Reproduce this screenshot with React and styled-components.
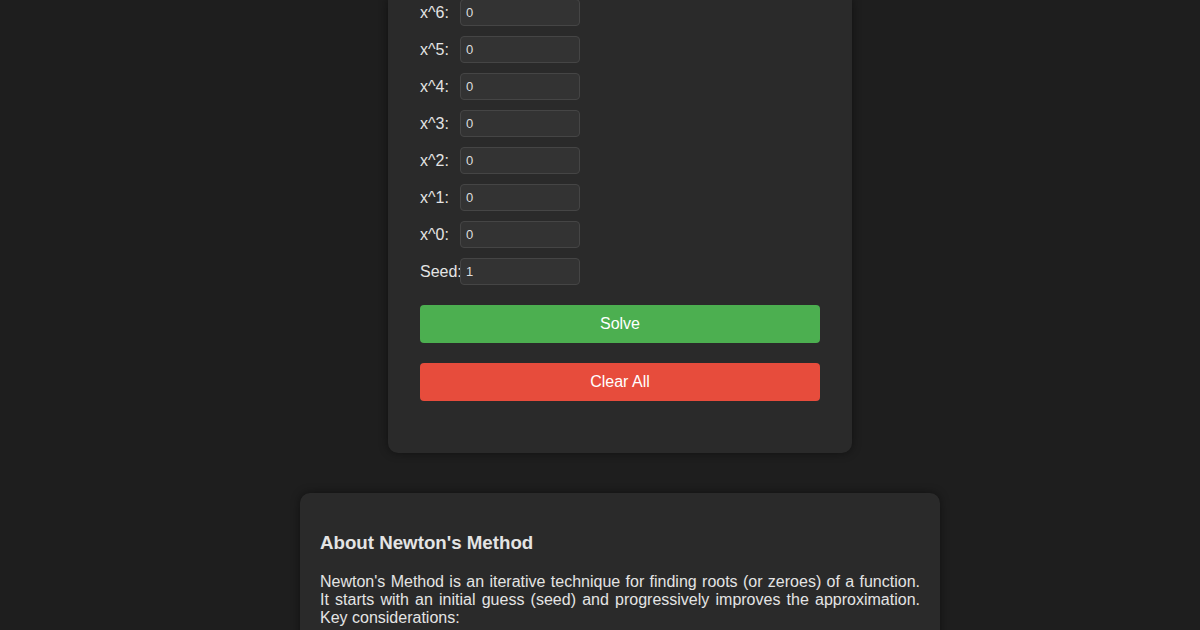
import React, { useState } from "react";
import styled, { createGlobalStyle } from "styled-components";

const GlobalStyle = createGlobalStyle`
  body {
    margin: 0;
    background-color: #1e1e1e;
    color: #e4e4e4;
    font-family: "Liberation Sans", Arial, sans-serif;
  }
`;

const powers = [6, 5, 4, 3, 2, 1, 0];

const App = () => {
  const [coefs, setCoefs] = useState(powers.map(() => "0"));
  const [seed, setSeed] = useState("1");

  const handleCoef = (i, value) => {
    const next = [...coefs];
    next[i] = value;
    setCoefs(next);
  };

  const clearAll = () => {
    setCoefs(powers.map(() => "0"));
    setSeed("1");
  };

  return (
    <>
      <GlobalStyle />
      <Page>
        <SolverCard>
          {powers.map((p, i) => (
            <Row key={p}>
              <Label>x^{p}:</Label>
              <Input
                type="text"
                value={coefs[i]}
                onChange={(e) => handleCoef(i, e.target.value)}
              />
            </Row>
          ))}
          <Row>
            <Label>Seed:</Label>
            <Input
              type="text"
              value={seed}
              onChange={(e) => setSeed(e.target.value)}
            />
          </Row>
          <Actions>
            <Btn color="#4caf50">Solve</Btn>
            <Btn color="#e74c3c" onClick={clearAll}>
              Clear All
            </Btn>
          </Actions>
        </SolverCard>

        <InfoCard>
          <h3>About Newton's Method</h3>
          <p>
            Newton's Method is an iterative technique for finding roots (or
            zeroes) of a function. It starts with an initial guess (seed) and
            progressively improves the approximation. Key considerations:
          </p>
        </InfoCard>
      </Page>
    </>
  );
};

const Page = styled.div`
  display: flex;
  flex-direction: column;
  align-items: center;
  gap: 40px;
  padding: 0 0 40px 40px;
`;

const SolverCard = styled.div`
  width: 400px;
  margin-top: -1px;
  padding: 0 32px 32px;
  background-color: #2a2a2a;
  border-radius: 0 0 10px 10px;
  box-shadow: 0 0 10px rgba(0, 0, 0, 0.45);
`;

const Row = styled.div`
  display: flex;
  align-items: center;
  height: 27px;
  margin-bottom: 10px;
`;

const Label = styled.label`
  width: 40px;
  font-size: 16px;
  white-space: nowrap;
`;

const Input = styled.input`
  box-sizing: border-box;
  width: 120px;
  height: 27px;
  padding: 0 5px;
  background-color: #333333;
  border: 1px solid #454545;
  border-radius: 4px;
  color: #dddddd;
  font-family: "Liberation Sans", Arial, sans-serif;
  font-size: 13px;
  outline: none;
`;

const Actions = styled.div`
  display: flex;
  flex-direction: column;
  gap: 20px;
  padding: 10px 0 20px;
`;

const Btn = styled.button`
  width: 100%;
  height: 38px;
  background-color: ${(props) => props.color};
  color: white;
  border: none;
  border-radius: 4px;
  font-family: "Liberation Sans", Arial, sans-serif;
  font-size: 16px;
  cursor: pointer;
`;

const InfoCard = styled.div`
  box-sizing: border-box;
  width: 640px;
  padding: 20px;
  background-color: #2a2a2a;
  border-radius: 10px;
  box-shadow: 0 0 10px rgba(0, 0, 0, 0.45);

  h3 {
    font-size: 18.72px;
    margin: 18.72px 0 19.72px;
  }

  p {
    margin: 0;
    font-size: 16px;
    text-align: justify;
  }
`;

export default App;
